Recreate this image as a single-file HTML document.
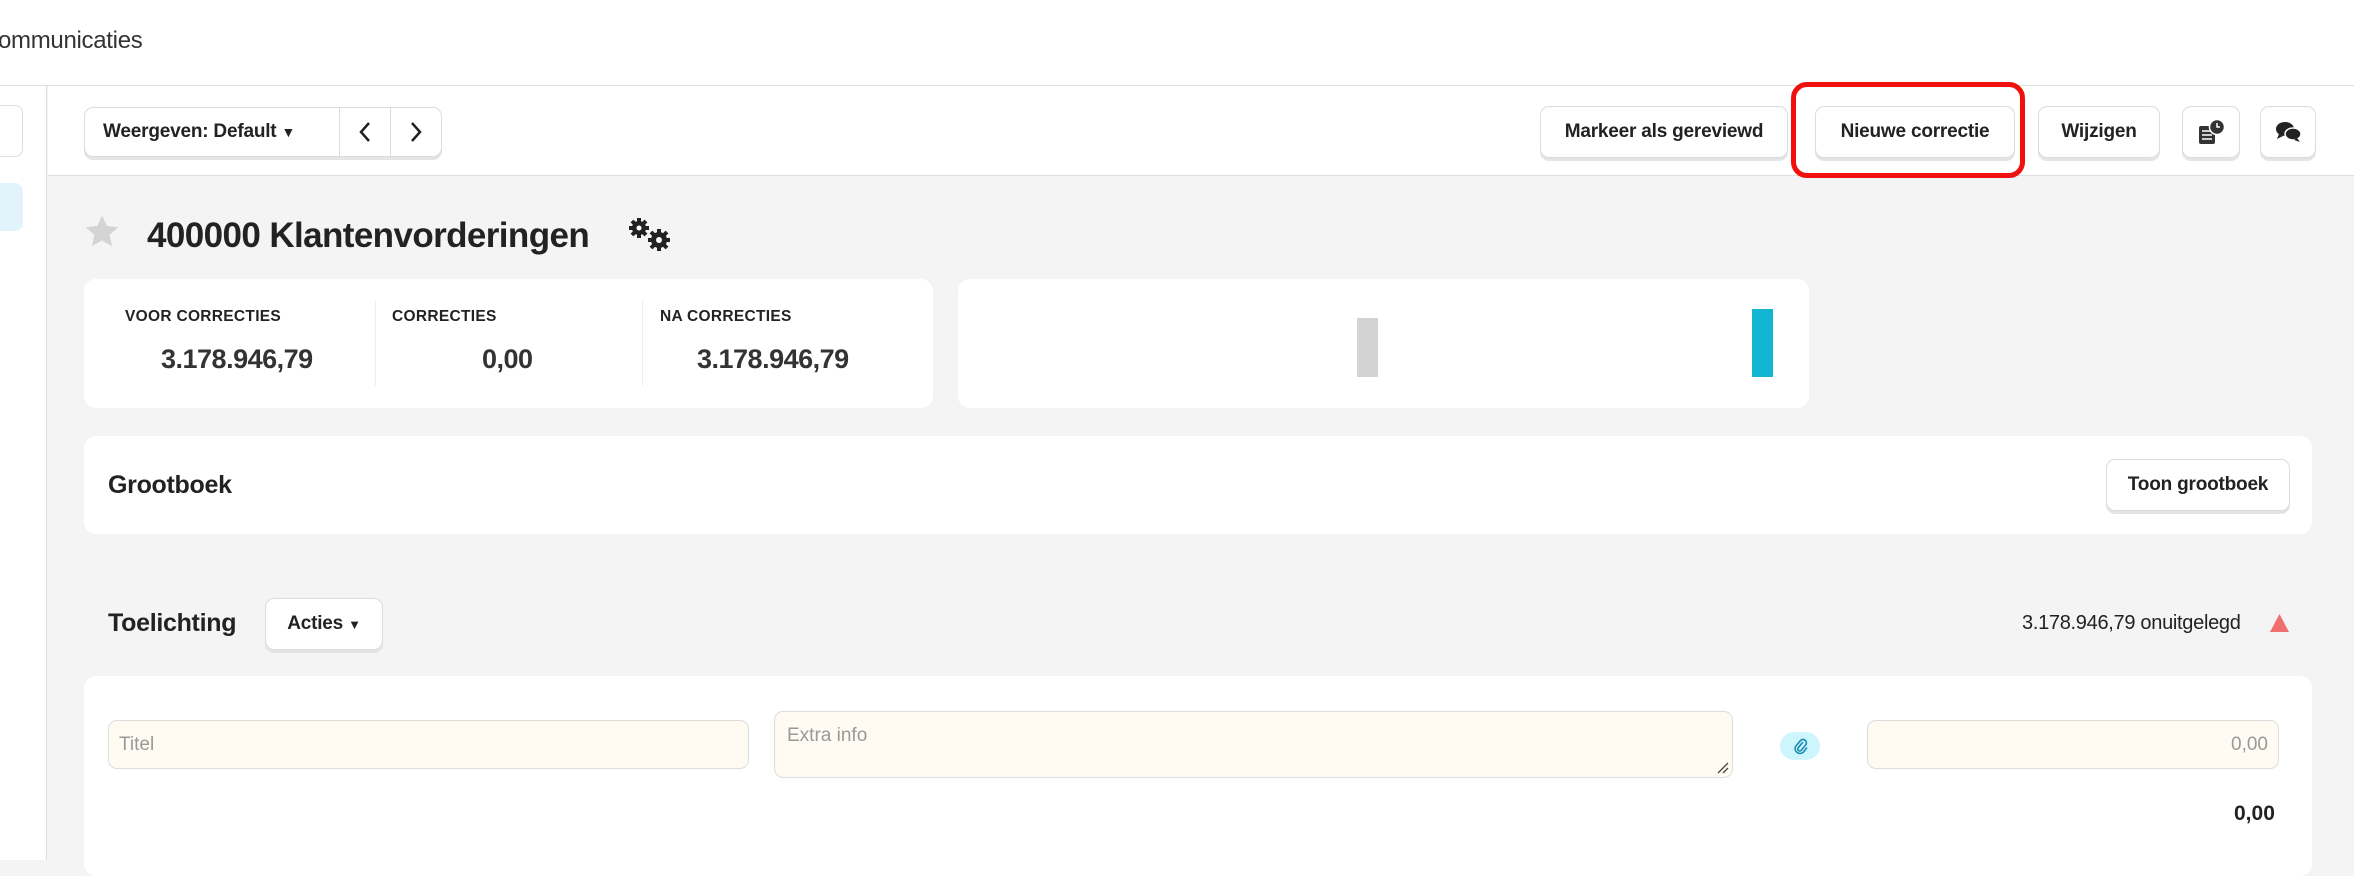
<!DOCTYPE html>
<html><head><meta charset="utf-8"><style>
*{box-sizing:border-box;margin:0;padding:0}
body{width:2354px;height:860px;overflow:hidden;background:#f4f4f4;font-family:"Liberation Sans",sans-serif;color:#222;position:relative}
.abs{position:absolute}
.btn{position:absolute;background:#fff;border:1.5px solid #dcdcdc;border-radius:9px;box-shadow:0 3px 0 #e4e4e4;display:flex;align-items:center;justify-content:center;font-size:19px;font-weight:bold;color:#222;letter-spacing:-.2px}
.card{position:absolute;background:#fff;border-radius:12px}
.lbl{position:absolute;font-size:15.5px;font-weight:bold;letter-spacing:.3px;top:308px}
.val{position:absolute;font-size:27px;font-weight:bold;color:#333;top:344px;letter-spacing:-.5px}
.inp{position:absolute;background:#fffbf2;border:1.5px solid #ddd;border-radius:9px;font-size:19px;color:#999}
</style></head><body>
<div class="abs" style="left:0;top:0;width:2354px;height:86px;background:#fff;border-bottom:1.5px solid #ddd"></div>
<div class="abs" style="left:-2px;top:27px;font-size:24px;color:#333;letter-spacing:-.3px">ommunicaties</div>
<div class="abs" style="left:0;top:86px;width:47px;height:774px;background:#fff;border-right:1.5px solid #ddd"></div>
<div class="abs" style="left:-10px;top:105px;width:33px;height:52px;background:#fff;border:1.5px solid #ddd;border-radius:8px"></div>
<div class="abs" style="left:-10px;top:183px;width:33px;height:48px;background:#e3f3fc;border-radius:8px"></div>
<div class="abs" style="left:48px;top:86px;width:2306px;height:90px;background:#fff;border-bottom:1.5px solid #ddd"></div>
<div class="btn" style="left:84px;top:107px;width:358px;height:50px;justify-content:flex-start">
 <span style="padding-left:18px;width:255px">Weergeven: Default <span style="font-size:14px">&#9660;</span></span>
 <span style="border-left:1.5px solid #ddd;height:100%;width:52px;display:flex;align-items:center;justify-content:center"><svg width="14" height="22" viewBox="0 0 14 22"><path d="M11 2L3 11l8 9" fill="none" stroke="#222" stroke-width="2.5"/></svg></span>
 <span style="border-left:1.5px solid #ddd;height:100%;width:51px;display:flex;align-items:center;justify-content:center"><svg width="14" height="22" viewBox="0 0 14 22"><path d="M3 2l8 9-8 9" fill="none" stroke="#222" stroke-width="2.5"/></svg></span>
</div>
<div class="btn" style="left:1540px;top:106px;width:248px;height:52px">Markeer als gereviewd</div>
<div class="btn" style="left:1815px;top:106px;width:200px;height:52px">Nieuwe correctie</div>
<div class="abs" style="left:1791px;top:82px;width:234px;height:96px;border:5px solid #f0100e;border-radius:16px"></div>
<div class="btn" style="left:2038px;top:106px;width:122px;height:52px">Wijzigen</div>
<div class="btn" style="left:2182px;top:106px;width:58px;height:52px"><svg width="30" height="28" viewBox="0 0 30 28"><rect x="3" y="8" width="16" height="18" rx="2" fill="#333"/><path d="M6 13h10M6 17h10M6 21h10" stroke="#fff" stroke-width="1.5"/><circle cx="21" cy="9" r="7.5" fill="#333" stroke="#fff" stroke-width="1.5"/><path d="M21 5v4h3" stroke="#fff" stroke-width="1.5" fill="none"/></svg></div>
<div class="btn" style="left:2260px;top:106px;width:56px;height:52px"><svg width="28" height="24" viewBox="0 0 28 24"><ellipse cx="11" cy="9" rx="9" ry="7" fill="#222"/><path d="M5 14l-2 5 6-3z" fill="#222"/><ellipse cx="19" cy="14" rx="8" ry="6" fill="#222" stroke="#fff" stroke-width="1.5"/><path d="M23 18l3 4-6-2z" fill="#222"/></svg></div>
<svg class="abs" style="left:84px;top:214px" width="36" height="36" viewBox="0 0 24 24"><path d="M12 1l3.2 7 7.6.8-5.7 5.1 1.6 7.5L12 17.6 5.3 21.4l1.6-7.5L1.2 8.8 8.8 8z" fill="#d4d4d4"/></svg>
<div class="abs" style="left:147px;top:216px;font-size:35px;font-weight:bold;color:#222;letter-spacing:-.6px">400000 Klantenvorderingen</div>
<svg class="abs" style="left:626px;top:216px" width="48" height="36" viewBox="0 0 48 36"><g fill="#222"><circle cx="13" cy="12" r="7"/><circle cx="33" cy="24" r="8"/></g><g stroke="#222" stroke-width="4"><path d="M13 2v20M3 12h20M6 5l14 14M20 5L6 19"/><path d="M33 13v22M22 24h22M25 16l16 16M41 16L25 32"/></g><circle cx="13" cy="12" r="2.5" fill="#fff"/><circle cx="33" cy="24" r="3" fill="#fff"/></svg>
<div class="card" style="left:84px;top:279px;width:849px;height:129px"></div>
<div class="abs" style="left:375px;top:300px;width:1px;height:86px;background:#eee"></div>
<div class="abs" style="left:642px;top:300px;width:1px;height:86px;background:#eee"></div>
<div class="lbl" style="left:125px">VOOR CORRECTIES</div>
<div class="lbl" style="left:392px">CORRECTIES</div>
<div class="lbl" style="left:660px">NA CORRECTIES</div>
<div class="val" style="left:161px">3.178.946,79</div>
<div class="val" style="left:482px">0,00</div>
<div class="val" style="left:697px">3.178.946,79</div>
<div class="card" style="left:958px;top:279px;width:851px;height:129px"></div>
<div class="abs" style="left:1357px;top:318px;width:21px;height:59px;background:#d3d3d3"></div>
<div class="abs" style="left:1752px;top:309px;width:21px;height:68px;background:#13b5d3"></div>
<div class="card" style="left:84px;top:436px;width:2228px;height:98px"></div>
<div class="abs" style="left:108px;top:471px;font-size:25px;font-weight:bold;letter-spacing:-.3px">Grootboek</div>
<div class="btn" style="left:2106px;top:459px;width:184px;height:52px">Toon grootboek</div>
<div class="abs" style="left:108px;top:609px;font-size:25px;font-weight:bold;letter-spacing:-.3px">Toelichting</div>
<div class="btn" style="left:265px;top:598px;width:118px;height:52px">Acties&nbsp;<span style="font-size:13px">&#9660;</span></div>
<div class="abs" style="left:2022px;top:612px;font-size:20px;color:#222;letter-spacing:-.3px">3.178.946,79 onuitgelegd</div>
<svg class="abs" style="left:2269px;top:613px" width="21" height="20"><path d="M10.5 1L20 19H1z" fill="#f06e6e"/></svg>
<div class="card" style="left:84px;top:676px;width:2228px;height:200px"></div>
<div class="inp" style="left:108px;top:720px;width:641px;height:49px;padding:13px 10px">Titel</div>
<div class="inp" style="left:774px;top:711px;width:959px;height:67px;padding:13px 12px">Extra info</div>
<svg class="abs" style="left:1717px;top:762px" width="12" height="12"><path d="M1 11L11 1M6 11L11 6" stroke="#444" stroke-width="1.3"/></svg>
<div class="abs" style="left:1780px;top:732px;width:40px;height:28px;border-radius:14px;background:#cdf5fd"></div>
<svg class="abs" style="left:1792px;top:736px" width="16" height="20" viewBox="0 0 16 20"><path d="M11 6l-5 6a2 2 0 0 0 3 2.5l5-6a3.5 3.5 0 0 0-5-4.5l-5.5 6.5a5 5 0 0 0 7.5 6l4-5" fill="none" stroke="#1a8ab0" stroke-width="1.6"/></svg>
<div class="inp" style="left:1867px;top:720px;width:412px;height:49px;padding:13px 10px;text-align:right">0,00</div>
<div class="abs" style="left:2234px;top:802px;font-size:21px;font-weight:bold">0,00</div>
</body></html>
